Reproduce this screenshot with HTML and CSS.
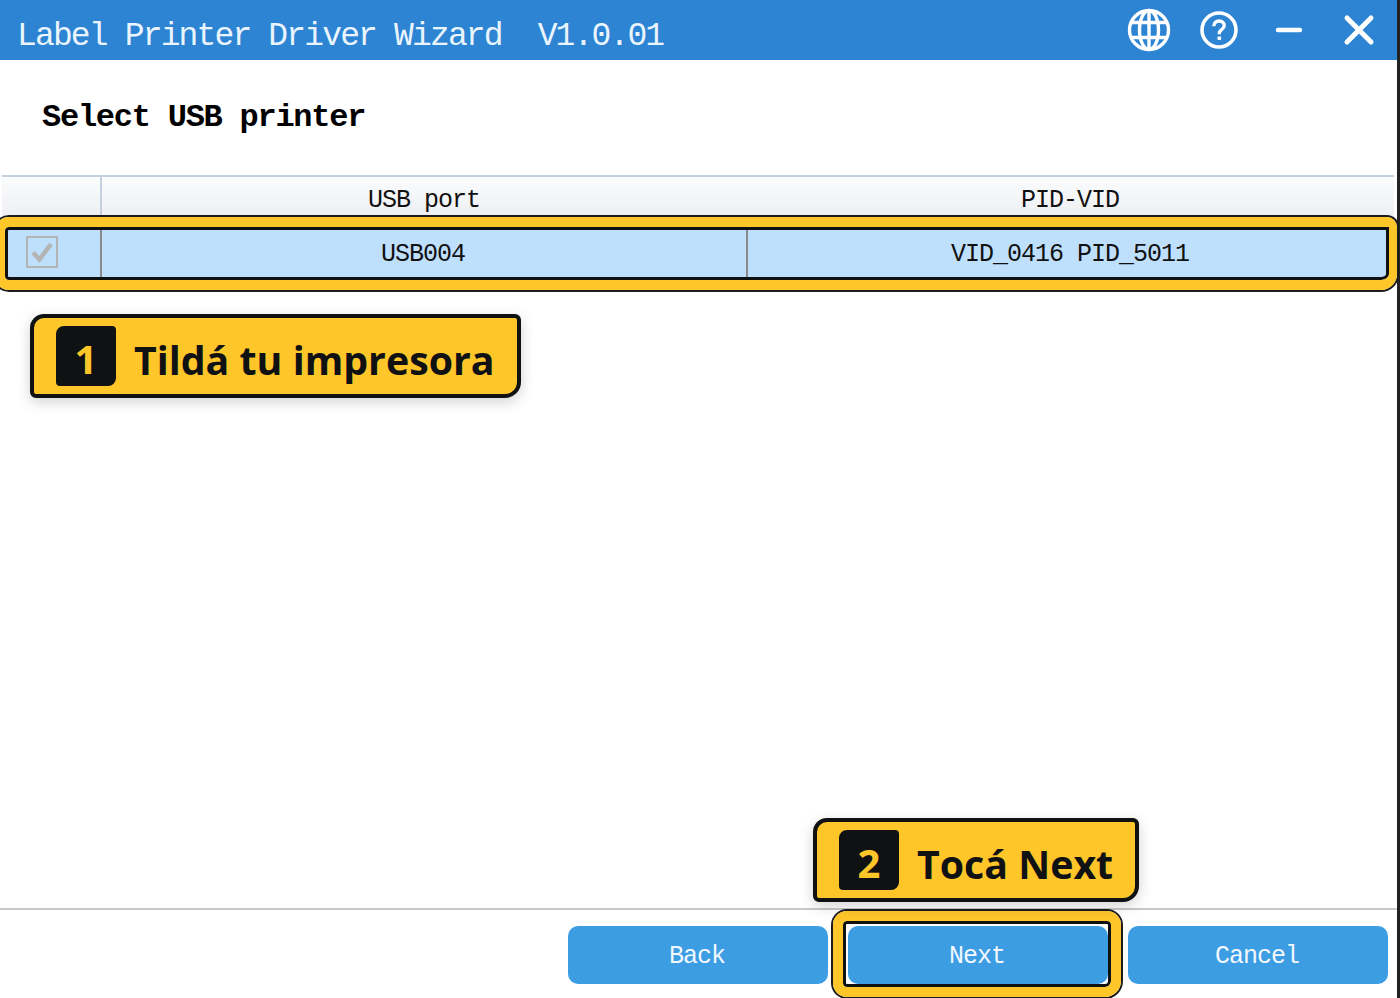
FILE: index.html
```html
<!DOCTYPE html>
<html lang="en">
<head>
<meta charset="utf-8">
<title>Label Printer Driver Wizard</title>
<link rel="stylesheet" href="styles.css">
</head>
<body>
<div class="screen">
  <div class="window">
    <header class="titlebar">
      <div class="title">Label Printer Driver Wizard  V1.0.01</div>
      <div class="controls">
        <span class="ctl"><svg width="44" height="44" viewBox="0 0 44 44" fill="none" stroke="#fff" stroke-width="3.4"><circle cx="22" cy="22" r="19.5"/><ellipse cx="22" cy="22" rx="9.5" ry="19.5"/><path d="M22 2.5V41.5M4.5 14.5H39.5M4.5 29.5H39.5"/></svg></span>
        <span class="ctl"><svg width="40" height="40" viewBox="0 0 40 40" fill="none" stroke="#fff"><circle cx="20" cy="20" r="17" stroke-width="3.6"/><path d="M14.8 16.2c0-3.2 2.3-5.2 5.3-5.2s5.1 1.9 5.1 4.5c0 2-1.1 3.1-2.6 4.2-1.5 1.1-2.3 2-2.3 3.8v.8" stroke-width="3.4"/><path d="M20.3 26.5v3.4" stroke-width="3.6"/></svg></span>
        <span class="ctl"><svg width="28" height="8" viewBox="0 0 28 8" fill="none" stroke="#fff" stroke-width="4.4" stroke-linecap="round"><path d="M3 4H25"/></svg></span>
        <span class="ctl"><svg width="34" height="34" viewBox="0 0 34 34" fill="none" stroke="#fff" stroke-width="5" stroke-linecap="round"><path d="M5 5L29 29M29 5L5 29"/></svg></span>
      </div>
    </header>
    <h1 class="heading">Select USB printer</h1>
    <div class="table">
      <div class="thead">
        <div class="th"></div>
        <div class="th th-last">USB port</div>
        <div class="th th-last">PID-VID</div>
      </div>
      <div class="trow">
        <div class="td td-check"><span class="checkbox"><svg width="26" height="26" viewBox="0 0 26 26" fill="none" stroke="#b4b4b4" stroke-width="4.5"><path d="M4 13.5L10.5 20.5L22 5"/></svg></span></div>
        <div class="td">USB004</div>
        <div class="td td-last">VID_0416 PID_5011</div>
      </div>
    </div>
    <div class="spacer"></div>
    <footer class="footer">
      <button class="btn">Back</button>
      <button class="btn">Next</button>
      <button class="btn">Cancel</button>
    </footer>
  </div>
  <div class="edge"></div>

  <div class="hl hl-row"></div>
  <div class="hl hl-next"></div>
  <div class="callout callout-one"><span class="num">1</span><span class="callout-text">Tildá tu impresora</span></div>
  <div class="callout callout-two"><span class="num">2</span><span class="callout-text">Tocá Next</span></div>
</div>
</body>
</html>
```
FILE: styles.css
```css
* { box-sizing: border-box; }
html, body { margin: 0; padding: 0; background: #fff; }
body { width: 1400px; height: 998px; overflow: hidden; }

.screen { position: relative; display: flex; width: 1400px; height: 998px; overflow: hidden; font-family: "Liberation Mono", monospace; }
.window { flex: 1; display: flex; flex-direction: column; min-width: 0; background: #fff; }
.edge { width: 3px; background: #222; }

.titlebar { height: 60px; flex: none; display: flex; align-items: center; justify-content: space-between; background: #2c84d2; padding-left: 17px; padding-right: 3px; }
.title { color: #eaf4fd; font-size: 33px; letter-spacing: -1.85px; white-space: pre; padding-top: 13px; line-height: 50px; }
.controls { display: flex; margin-top: -1px; }
.ctl { width: 70px; height: 60px; display: flex; align-items: center; justify-content: center; }

.heading { margin: 0; height: 115px; flex: none; padding: 40px 0 0 42px; font-size: 32px; line-height: 36px; letter-spacing: -1.25px; font-weight: 700; color: #000; white-space: pre; }

.table { margin: 0 3px 0 2px; flex: none; color: #111; font-size: 25px; letter-spacing: -1px; }
.thead, .trow { display: grid; grid-template-columns: 100px 646px 1fr; }
.thead { height: 54px; border-top: 2px solid #c5d0de; background: linear-gradient(#fbfcfd, #eaebef); }
.th { border-right: 2px solid #c5d0de; text-align: center; padding: 8px 2px 0 0; line-height: 32px; }
.th-last { border-right: 0; }
.trow { height: 49px; background: #bfe0fd; }
.td { border-right: 2px solid #8a8a8a; text-align: center; padding-right: 2px; line-height: 51px; }
.td-last { border-right: 0; }
.td-check { display: flex; align-items: flex-start; padding: 7px 0 0 24px; }
.checkbox { width: 32px; height: 32px; border: 2px solid #b2b4b6; display: flex; align-items: center; justify-content: center; }

.spacer { flex: 1; }
.footer { flex: none; height: 90px; border-top: 2px solid #c8c8c8; display: flex; justify-content: flex-end; gap: 20px; padding: 16px 9px 0 0; }
.btn { width: 260px; height: 58px; border: 0; border-radius: 10px; background: #3c9de2; color: #f2f8fd; font-family: "Liberation Mono", monospace; font-size: 25px; letter-spacing: -1px; padding: 2px 2px 0 0; }

.hl { position: absolute; border: 10px solid #ffc62a; box-shadow: 0 0 0 2px #1c1c1e, inset 0 0 0 3px #0f1113; }
.hl-row { left: -5px; top: 217px; width: 1402px; height: 73px; border-right-width: 8px; border-radius: 14px 10px 16px 14px; }
.hl-next { left: 833px; top: 911px; width: 288px; height: 86px; border-radius: 14px 14px 16px 14px; }

.callout { position: absolute; height: 84px; display: flex; align-items: center; padding-left: 22px; background: #ffc62a; border: 4px solid #0f1113; border-radius: 14px 6px 16px 6px; box-shadow: 0 4px 14px rgba(0, 0, 0, 0.18); color: #0f1113; font-family: "Open Sans", sans-serif; font-weight: 700; }
.callout-one { left: 30px; top: 314px; width: 491px; }
.callout-two { left: 813px; top: 818px; width: 326px; }
.num { width: 60px; height: 60px; flex: none; display: flex; align-items: center; justify-content: center; background: #0f1113; color: #ffc62a; border-radius: 8px 4px 8px 4px; font-size: 40px; line-height: 60px; padding-top: 6px; }
.callout-text { margin-left: 18px; font-size: 39.3px; line-height: 60px; padding-top: 8px; white-space: pre; }
```
